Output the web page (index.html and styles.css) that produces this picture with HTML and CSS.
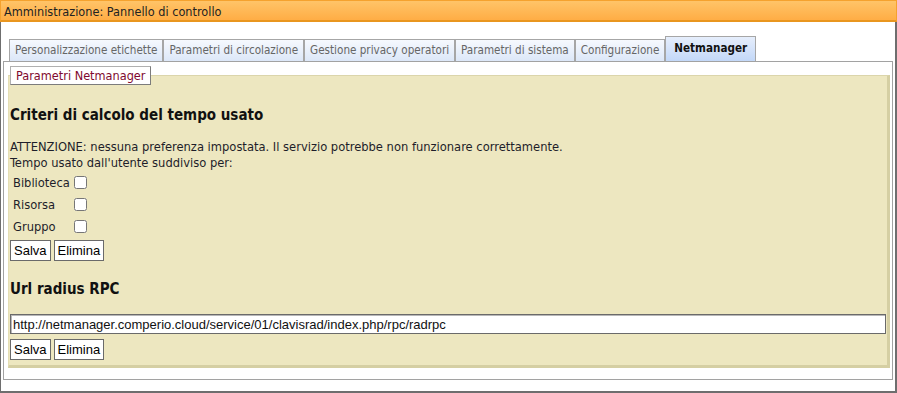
FILE: index.html
```html
<html>
<head>
	<title>Amministrazione</title>
	<link rel="stylesheet" href="styles.css">
</head>
<body>
	<div class="titlebar">Amministrazione: Pannello di controllo</div>
	<div class="content">
		<ul class="tabs">
			<li>Personalizzazione etichette</li>
			<li>Parametri di circolazione</li>
			<li>Gestione privacy operatori</li>
			<li>Parametri di sistema</li>
			<li>Configurazione</li>
			<li class="active">Netmanager</li>
		</ul>
		<div class="panel">
			<fieldset class="box">
				<legend>Parametri Netmanager</legend>
				<h3>Criteri di calcolo del tempo usato</h3>
				<p class="note">ATTENZIONE: nessuna preferenza impostata. Il servizio potrebbe non funzionare correttamente.<br>Tempo usato dall'utente suddiviso per:</p>
				<table class="opts">
					<tr><td>Biblioteca</td><td><input type="checkbox"></td></tr>
					<tr><td>Risorsa</td><td><input type="checkbox"></td></tr>
					<tr><td>Gruppo</td><td><input type="checkbox"></td></tr>
				</table>
				<div class="actions">
					<button type="button">Salva</button>
					<button type="button">Elimina</button>
				</div>
				<h3 class="second">Url radius RPC</h3>
				<input class="url" type="text" value="http://netmanager.comperio.cloud/service/01/clavisrad/index.php/rpc/radrpc">
				<div class="actions last">
					<button type="button">Salva</button>
					<button type="button">Elimina</button>
				</div>
			</fieldset>
		</div>
	</div>
</body>
</html>
```

FILE: styles.css
```css
body {
	margin: 0;
	font-family: "DejaVu Sans Condensed", "DejaVu Sans", sans-serif;
	font-stretch: condensed;
	font-size: 12.8px;
	color: #1e1e2a;
	background: white;
}
.titlebar {
	height: 22px;
	box-sizing: border-box;
	padding: 1px 0 0 3px;
	font-size: 12.6px;
	line-height: 19px;
	color: #222;
	border: 1px solid #f5a22e;
	border-bottom: 2px solid #e9961f;
	background: linear-gradient(#ffc468, #ffad45);
}
.content {
	height: 371px;
	box-sizing: border-box;
	border: solid #6e6e6e;
	border-width: 0 2px 2px 1px;
	padding: 14px 2px 0 2px;
}
.tabs {
	display: flex;
	align-items: flex-end;
	list-style: none;
	margin: 0 0 0 6px;
	padding: 0;
	font-size: 11.6px;
}
.tabs li {
	height: 22px;
	box-sizing: border-box;
	padding: 0 5px;
	line-height: 21px;
	color: #666;
	border: 1px solid #a6a6a6;
	border-bottom: 0 none;
	background: linear-gradient(#f6f9fe, #dce7f8);
}
.tabs li.active {
	height: 25px;
	padding: 0 8px;
	line-height: 22px;
	font-weight: bold;
	color: #111;
	background: linear-gradient(#e6eefc, #c3d8f8);
}
.panel {
	border: 1px solid #a2a2a2;
	background: white;
	padding: 4px 2px 11px 4px;
}
.box {
	margin: 0;
	padding: 0 1px 5px 1px;
	border-style: solid;
	border-width: 1px 3px 3px 1px;
	border-color: #dbd5ab #d5cfa3 #d5cfa3 #e4deb4;
	background-color: #ede7c0;
}
.box legend {
	padding: 1px 5px;
	font-size: 12.6px;
	line-height: 15px;
	color: #7f0a2f;
	background: white;
	border: 1px solid;
	border-color: #b0b0b0 #7c7c7c #7c7c7c #b0b0b0;
}
.box h3 {
	margin: 21px 0 15px;
	font-size: 15px;
	line-height: 18px;
	color: #111;
}
.box h3.second {
	margin: 19px 0 16px;
}
.note {
	margin: 0;
	line-height: 16px;
}
.opts {
	border-spacing: 0;
	font-size: inherit;
	color: inherit;
}
.opts td {
	height: 22px;
	padding: 0 0 0 3px;
	vertical-align: middle;
}
.opts td:nth-child(2) {
	padding: 0;
}
.opts input {
	margin: 1px 3px 0 4px;
	vertical-align: middle;
}
.actions {
	display: flex;
	gap: 3px;
	margin-top: 3px;
}
.actions.last {
	margin-top: 5px;
}
.actions button {
	height: 21px;
	padding: 0 3px;
	font-family: "Liberation Sans", Arial, sans-serif;
	font-size: 13px;
	color: black;
	background: white;
	border: 1px solid #6a6a6a;
	border-radius: 0;
}
.url {
	display: block;
	width: 100%;
	height: 20px;
	box-sizing: border-box;
	margin: 0;
	padding: 0 2px;
	font-family: "Liberation Sans", Arial, sans-serif;
	font-size: 13px;
	color: #111;
	border: 1px solid #6a6a6a;
	border-radius: 0;
	box-shadow: inset 1px 1px 0 #b8b8b8;
}
```
